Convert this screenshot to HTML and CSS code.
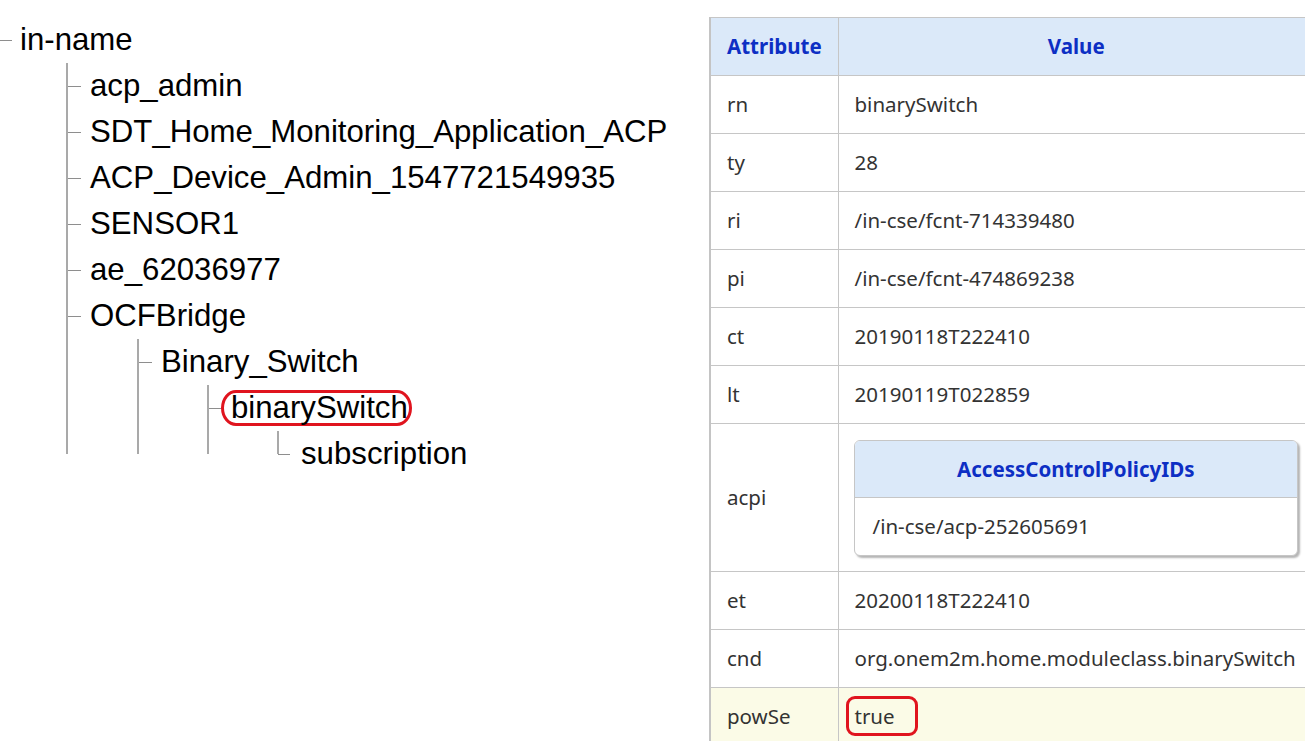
FILE: index.html
```html
<!DOCTYPE html>
<html>
<head>
<meta charset="utf-8">
<link rel="stylesheet" href="styles.css">
</head>
<body>
<div class="page">
  <div class="tree-col">
    <ul class="tree">
      <li>
        <div class="node root"><span class="label">in-name</span></div>
        <ul class="branch b1">
          <li><div class="node"><span class="label">acp_admin</span></div></li>
          <li><div class="node"><span class="label">SDT_Home_Monitoring_Application_ACP</span></div></li>
          <li><div class="node"><span class="label">ACP_Device_Admin_1547721549935</span></div></li>
          <li><div class="node"><span class="label">SENSOR1</span></div></li>
          <li><div class="node"><span class="label">ae_62036977</span></div></li>
          <li>
            <div class="node"><span class="label">OCFBridge</span></div>
            <ul class="branch bn">
              <li>
                <div class="node"><span class="label">Binary_Switch</span></div>
                <ul class="branch bn">
                  <li>
                    <div class="node"><span class="label selected">binarySwitch</span></div>
                    <ul class="branch bn">
                      <li><div class="node short"><span class="label">subscription</span></div></li>
                    </ul>
                  </li>
                </ul>
              </li>
            </ul>
          </li>
        </ul>
      </li>
    </ul>
  </div>
  <div class="table-col">
    <table class="attrs">
      <colgroup><col class="c-attr"><col class="c-val"></colgroup>
      <thead>
        <tr><th>Attribute</th><th>Value</th></tr>
      </thead>
      <tbody>
        <tr><td>rn</td><td>binarySwitch</td></tr>
        <tr><td>ty</td><td>28</td></tr>
        <tr><td>ri</td><td>/in-cse/fcnt-714339480</td></tr>
        <tr><td>pi</td><td>/in-cse/fcnt-474869238</td></tr>
        <tr><td>ct</td><td>20190118T222410</td></tr>
        <tr><td>lt</td><td>20190119T022859</td></tr>
        <tr class="nested-row">
          <td>acpi</td>
          <td>
            <div class="subtable">
              <div class="sub-head">AccessControlPolicyIDs</div>
              <div class="sub-row">/in-cse/acp-252605691</div>
            </div>
          </td>
        </tr>
        <tr><td>et</td><td>20200118T222410</td></tr>
        <tr><td>cnd</td><td>org.onem2m.home.moduleclass.binarySwitch</td></tr>
        <tr class="hl"><td>powSe</td><td><span class="oval">true</span></td></tr>
      </tbody>
    </table>
  </div>
</div>
</body>
</html>
```

FILE: styles.css
```css
html, body {
  margin: 0;
  padding: 0;
  background: #ffffff;
}
body {
  width: 1305px;
  height: 741px;
  overflow: hidden;
}
.page {
  display: flex;
  align-items: flex-start;
  padding-top: 17px;
}
.tree-col {
  flex: none;
  width: 709px;
}
.table-col {
  flex: none;
  width: 606px;
}

/* ---------- tree ---------- */
.tree, .branch {
  list-style: none;
  margin: 0;
  padding: 0;
}
.tree {
  font-family: "Liberation Sans", Arial, sans-serif;
  font-size: 31.2px;
  color: #000;
}
.branch {
  position: relative;
}
.branch::before {
  content: "";
  position: absolute;
  left: 0;
  top: 0;
  bottom: 23px;
  border-left: 2px solid #a9a9a9;
}
.b1 { margin-left: 66px; }
.bn { margin-left: 71px; }
.bn .bn { margin-left: 70px; }
.node {
  display: flex;
  align-items: center;
  height: 46px;
  white-space: nowrap;
}
.node::before {
  content: "";
  flex: none;
  width: 14px;
  margin-left: 1px;
  margin-right: 9px;
  border-top: 1px solid #8e8e8e;
}
.node.root::before {
  width: 12px;
  margin-left: 0;
  margin-right: 8px;
}
.node.short::before {
  width: 12px;
  margin-right: 11px;
}
.label {
  line-height: 46px;
}
.label.selected {
  line-height: 30px;
  border: 3px solid #e0141e;
  border-radius: 15px / 18px;
  padding: 0 1px 0 7px;
  margin-left: -10px;
}

/* ---------- attribute table ---------- */
.attrs {
  width: 606px;
  table-layout: fixed;
  border-collapse: collapse;
  font-family: "Noto Sans", "Open Sans", sans-serif;
  font-size: 20.5px;
  color: #333;
  border-left: 2px solid #c4c4c4;
}
.c-attr { width: 128px; }
.attrs th, .attrs td {
  border: 1px solid #c6c6c6;
  height: 58px;
  padding: 0 16px 1px;
  text-align: left;
  white-space: nowrap;
  box-sizing: border-box;
}
.attrs th {
  background: #dbe9f9;
  color: #0d2fc4;
  font-weight: bold;
  text-align: center;
}
.attrs tr.hl td {
  background: #fbfbe7;
}
.nested-row td {
  height: 148px;
}
.nested-row td:last-child {
  padding: 16px 16px 15px 15px;
}
.subtable {
  border: 1px solid #c6c6c6;
  border-radius: 6px;
  box-shadow: 2px 2px 2px #b5b5b5;
  overflow: hidden;
  background: #fff;
}
.sub-head {
  height: 56px;
  line-height: 56px;
  text-align: center;
  background: #dbe9f9;
  color: #0d2fc4;
  font-weight: bold;
  border-bottom: 1px solid #c6c6c6;
}
.sub-row {
  height: 57px;
  line-height: 57px;
  padding-left: 18px;
}
.oval {
  display: inline-block;
  border: 3px solid #e0141e;
  border-radius: 9px;
  padding: 0 20px 0 6px;
  margin-left: -9px;
  line-height: 34px;
}
```
